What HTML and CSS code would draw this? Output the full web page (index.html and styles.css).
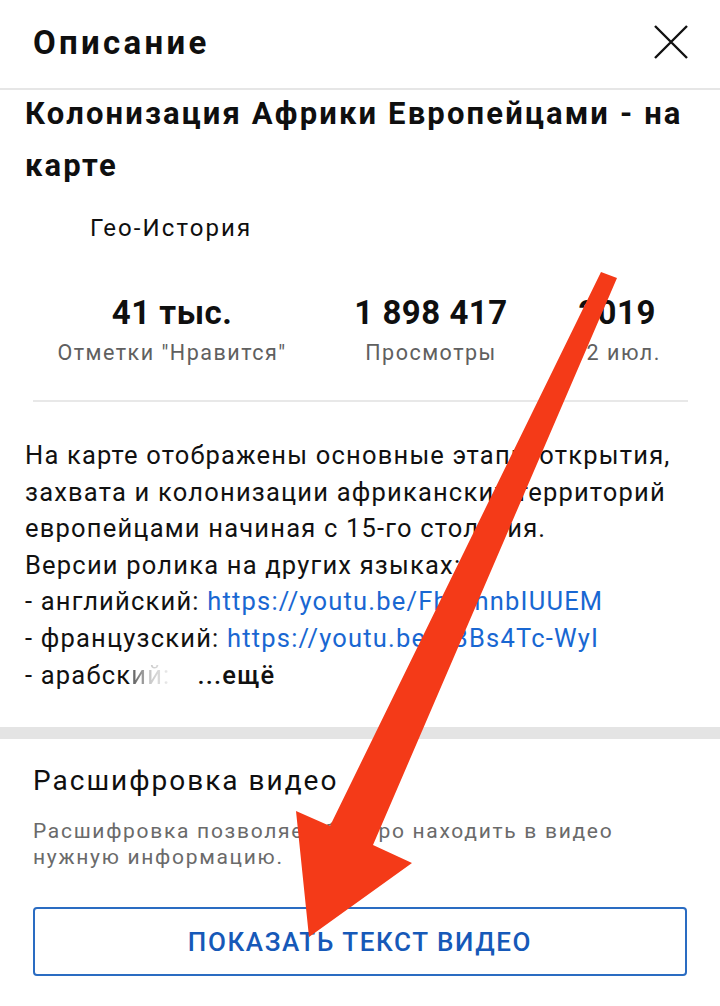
FILE: index.html
```html
<!DOCTYPE html>
<html lang="ru">
<head>
<meta charset="utf-8">
<title>Описание</title>
<link rel="stylesheet" href="styles.css">
</head>
<body>
<div class="page">
  <header class="header">
    <h1 class="header-title">Описание</h1>
    <svg class="close" viewBox="0 0 36 36" width="36" height="36" aria-label="Закрыть">
      <path d="M2 2 L34 34 M34 2 L2 34" stroke="#111" stroke-width="2.4" fill="none"/>
    </svg>
  </header>

  <section class="info">
    <h2 class="video-title">Колонизация Африки Европейцами - на карте</h2>
    <div class="channel">Гео-История</div>
    <div class="stats">
      <div class="stat stat-likes">
        <div class="stat-value">41 тыс.</div>
        <div class="stat-label">Отметки "Нравится"</div>
      </div>
      <div class="stat stat-views">
        <div class="stat-value">1 898 417</div>
        <div class="stat-label">Просмотры</div>
      </div>
      <div class="stat stat-date">
        <div class="stat-value">2019</div>
        <div class="stat-label">12 июл.</div>
      </div>
    </div>
    <div class="divider"></div>
    <p class="description">На карте отображены основные этапы открытия, захвата и колонизации африканских территорий европейцами начиная с 15-го столетия.<br>Версии ролика на других языках:<br>- английский: <a class="link">https://youtu.be/FbXmnbIUUEM</a><br>- французский: <a class="link">https://youtu.be/b3Bs4Tc-WyI</a><br>- арабск<span class="fade">ий:</span><span class="more">...ещё</span></p>
  </section>

  <div class="section-gap"></div>

  <section class="transcript">
    <h3 class="transcript-title">Расшифровка видео</h3>
    <p class="transcript-text">Расшифровка позволяет быстро находить в видео нужную информацию.</p>
    <button class="transcript-btn">ПОКАЗАТЬ ТЕКСТ ВИДЕО</button>
  </section>

  <svg class="arrow" viewBox="0 0 720 1006" width="720" height="1006">
    <polygon points="601,272 617,278 373,845 412,863 309,937 296,811 330,826" fill="#f43a18"/>
  </svg>
</div>
</body>
</html>
```

FILE: styles.css
```css
* { box-sizing: border-box; }
html, body { margin: 0; padding: 0; background: #fff; }
body { font-family: Roboto, "Noto Sans", sans-serif; color: #0f0f0f; }

.page { position: relative; width: 720px; height: 1006px; overflow: hidden; }

.header {
  height: 90px;
  display: flex;
  align-items: center;
  justify-content: space-between;
  padding: 0 33px 4px 33px;
  border-bottom: 2px solid #e6e6e6;
}
.header-title { margin: 0; font-size: 33px; font-weight: 700; letter-spacing: 3.3px; }
.close { display: block; margin-right: -2px; }

.info { padding: 0 25px; }
.video-title {
  margin: -2px 0 0 0;
  font-size: 31px;
  font-weight: 700;
  line-height: 52px;
  letter-spacing: 2.15px;
}
.channel {
  margin: 21px 0 0 65px;
  font-size: 24px;
  line-height: 30px;
  letter-spacing: 2.1px;
}
.stats {
  display: flex;
  margin: 50px 0 0 8px;
}
.stat { text-align: center; }
.stat-likes { width: 278px; }
.stat-views { width: 240px; }
.stat-date { width: 132px; }
.stat-value { font-size: 33px; font-weight: 700; line-height: 40px; letter-spacing: 0.5px; }
.stat-label { font-size: 21.5px; color: #606060; line-height: 30px; margin-top: 5px; letter-spacing: 1.5px; }

.divider { height: 2px; background: #e8e8e8; margin: 32px 7px 0 8px; }

.description {
  margin: 35px 0 0 0;
  font-size: 25.5px;
  line-height: 36.6px;
  letter-spacing: 1.2px;
  color: #111;
}
.link { color: #1967d2; text-decoration: none; }
.fade {
  background: linear-gradient(to right, #555 0%, #ccc 50%, #eee 100%);
  -webkit-background-clip: text;
  background-clip: text;
  color: transparent;
}
.more { font-weight: 500; color: #111; margin-left: 27px; }

.section-gap { height: 12px; background: #e4e4e4; margin-top: 34px; }

.transcript { padding: 0 33px; }
.transcript-title {
  margin: 24px 0 0 0;
  font-size: 28px;
  font-weight: 400;
  line-height: 36px;
  letter-spacing: 2px;
}
.transcript-text {
  margin: 19px 0 0 0;
  font-size: 21px;
  line-height: 26px;
  letter-spacing: 1.7px;
  color: #6a6a6a;
}
.transcript-btn {
  display: block;
  width: 100%;
  height: 69px;
  margin-top: 37px;
  background: #fff;
  border: 2px solid #2a6cc2;
  border-radius: 4px;
  font-family: Roboto, "Noto Sans", sans-serif;
  font-size: 26px;
  font-weight: 500;
  color: #1659b8;
  letter-spacing: 1.6px;
}

.arrow { position: absolute; left: 0; top: 0; pointer-events: none; }
```
